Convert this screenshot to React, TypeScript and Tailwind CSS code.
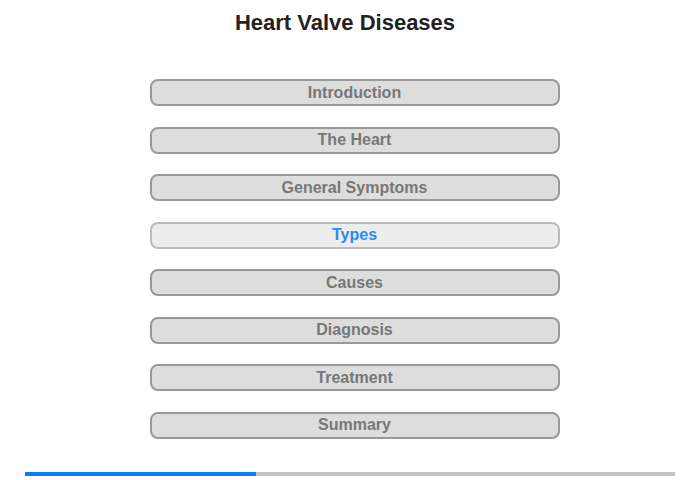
const items = [
  "Introduction",
  "The Heart",
  "General Symptoms",
  "Types",
  "Causes",
  "Diagnosis",
  "Treatment",
  "Summary",
];

const active = "Types";

export default function App() {
  return (
    <div className="w-[700px] h-[480px] bg-white flex flex-col font-['Liberation_Sans',Arial,sans-serif]">
      <h1 className="text-center text-[22px] font-bold text-[#222] pt-[10px] pr-[10px] leading-[26px]">
        Heart Valve Diseases
      </h1>

      <nav className="flex flex-col items-center gap-[20.5px] mt-[43px] pl-[9px]">
        {items.map((item) => {
          const isActive = item === active;
          return (
            <div
              key={item}
              className={`w-[410px] h-[27px] rounded-[8px] border-2 flex items-center justify-center text-[16px] font-bold ${
                isActive
                  ? "bg-[#ededed] border-[#bbb] text-[#2a8af6]"
                  : "bg-[#dddddd] border-[#999] text-[#777]"
              }`}
            >
              {item}
            </div>
          );
        })}
      </nav>

      {/* Progress */}
      <div className="mt-auto mb-[4px] mx-[25px] h-[4px] bg-[#c3c3c3] flex">
        <div className="w-[231px] h-full bg-[#0a7cff]" />
      </div>
    </div>
  );
}
